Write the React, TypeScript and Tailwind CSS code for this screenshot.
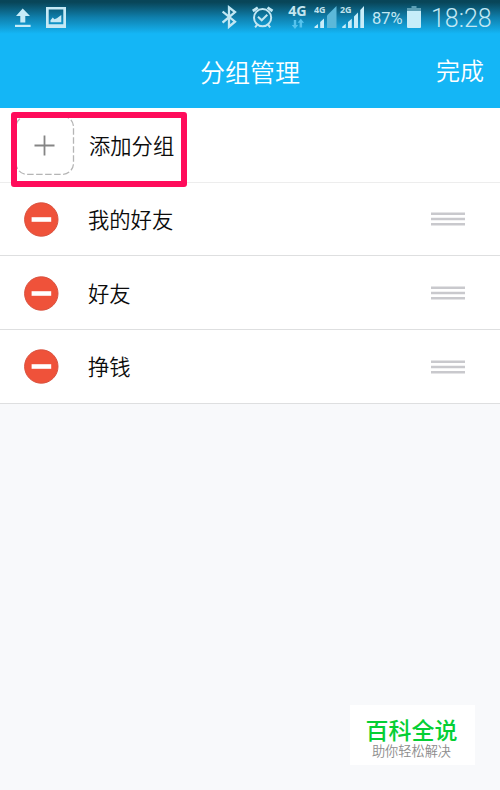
import React from 'react';

const groups = [
  { id: 1, name: '我的好友' },
  { id: 2, name: '好友' },
  { id: 3, name: '挣钱' },
];

const UploadIcon = () => (
  <svg className="ml-[15px] shrink-0" width="16" height="36" viewBox="15 0 16 36" fill="#c6ecf8">
    <path d="M22.700 8.500 30 16h-4.700v6.500h-5V16H16z" />
    <path d="M15 24.800h15.600v2.200H15z" />
  </svg>
);

const PictureIcon = () => (
  <svg className="ml-[15px] shrink-0" width="20" height="36" viewBox="46 0 20 36" fill="#c6e9f5">
    <path fillRule="evenodd" d="M46 7h20v21H46zM48.700 9.500v14.800h14.600V9.500z" />
    <path d="M50.500 22.300v-2l2.300-2.800 1.600 1.800 2.500-1 4.400-3.300v7.300z" />
  </svg>
);

const BluetoothIcon = () => (
  <svg className="shrink-0" width="16" height="36" viewBox="222 0 16 36" fill="none" stroke="#c2e7f3" strokeWidth="2.300">
    <path d="m222.600 11.600 12.400 10.100-6 5V7.400l6 4.600-12.400 10.600" />
  </svg>
);

const AlarmIcon = () => (
  <svg className="ml-[14px] shrink-0" width="22" height="36" viewBox="252 0 22 36" fill="none" stroke="#c2e7f3" strokeWidth="2">
    <circle cx="262.600" cy="17.700" r="8.600" />
    <path strokeWidth="2.800" d="m252.800 11 5-3.400M272.500 11l-5-3.400" />
    <path d="M258 16.800l3.700 3.500 5.600-5.600M257.300 24.700l-2.200 2.700M268 24.700l2.200 2.700" />
  </svg>
);

const NetworkIcon = () => (
  <svg className="ml-[14px] shrink-0" width="20" height="36" viewBox="288 0 20 36">
    <text x="288.200" y="16.400" fontSize="15" fontWeight="700" fill="#c4e5ef" textLength="18.500" lengthAdjust="spacingAndGlyphs" className="font-['Open_Sans',sans-serif]">4G</text>
    <path fill="#55c3ee" d="M293.800 20h2.400v5h1.900l-3.100 4-3.200-4h2zM299.600 27.500h2.500v-4.700h2l-3.300-4-3.200 4h2z" />
  </svg>
);

const SignalIcon = ({ label, weak }: { label: string; weak?: boolean }) => (
  <svg className="shrink-0" width="26" height="36" viewBox="0 0 26 36">
    <text x="0" y="13.200" fontSize="8.800" fontWeight="700" fill="#c0e2ed" textLength="11.600" lengthAdjust="spacingAndGlyphs" className="font-['Open_Sans',sans-serif]">{label}</text>
    {weak ? (
      <>
        <path fill="#5bb8d9" d="M13 28V15.500L22.500 6v22z" />
        <path fill="#c8edf9" d="M.500 28v-1.300L4 24v4zM6.200 28v-6l3.800-3.500V28z" />
      </>
    ) : (
      <path fill="#c8edf9" d="M2.200 28v-1.200l3.600-3V28zM8 28v-6l3.800-3.200V28zM14 28V16.500l4-4V28zM20.300 28V10l3.700-4v22z" />
    )}
  </svg>
);

const BatteryIcon = () => (
  <svg className="shrink-0" width="14" height="36" viewBox="407 0 14 36">
    <path fill="#5c9fb5" d="M411.500 6h5v2h4.500v4h-14V8h4.500z" />
    <path fill="#c6edf9" d="M407 11h14v16a1 1 0 0 1-1 1h-12a1 1 0 0 1-1-1z" />
  </svg>
);

const DeleteIcon = () => (
  <svg className="ml-6 shrink-0" width="35" height="35" viewBox="0 0 35 35">
    <circle cx="17.300" cy="17.500" r="16.700" fill="#ef523a" stroke="#d9523f" />
    <path fill="#fff" d="M7.600 15.200h19.600v4.600H7.600z" />
  </svg>
);

const DragHandle = () => (
  <svg className="ml-auto mr-[35px] shrink-0" width="34" height="14" viewBox="0 0 34 14" stroke="#c9c9cd" strokeWidth="2.400">
    <path d="M0 1.800h34M0 7h34M0 12.200h34" />
  </svg>
);

const StatusBar = () => (
  <div className="flex h-9 items-center bg-linear-to-b from-[#084558] from-6% via-[#0f7fac] via-48% to-[#14b6f6] to-94% text-[#c2e8f4]">
    <UploadIcon />
    <PictureIcon />
    <div className="ml-auto flex h-9 w-[278px] items-center">
      <BluetoothIcon />
      <AlarmIcon />
      <NetworkIcon />
      <div className="ml-[6px] flex">
        <SignalIcon label="4G" weak />
        <SignalIcon label="2G" />
      </div>
      <span className="ml-[6px] w-[35px] whitespace-nowrap pt-px font-['Roboto',sans-serif] text-[16.500px] leading-9">87%</span>
      <BatteryIcon />
      <span className="ml-[10px] whitespace-nowrap pt-[2px] font-['Roboto',sans-serif] text-[25px] font-[350] leading-9">18:28</span>
    </div>
  </div>
);

const App: React.FC = () => {
  return (
    <div className="relative h-[790px] w-[500px] overflow-hidden bg-[#f8f9fb] font-['Noto_Sans_CJK_SC',sans-serif]">
      <header className="h-[108px] bg-[#14b6f6]">
        <StatusBar />
        <div className="grid h-[72px] grid-cols-[1fr_auto_1fr] items-center font-[350] text-white">
          <span />
          <h1 className="pb-px text-[25px] leading-[71px]">分组管理</h1>
          <button className="mr-4 justify-self-end pb-[4px] text-[24px] leading-[68px]">完成</button>
        </div>
      </header>

      <main className="bg-white text-[21.300px] font-[350] text-[#0c0c0c]">
        {/* Add group */}
        <div className="flex h-[74.500px] items-center border-b border-[#ededed]">
          <svg className="ml-[15px] shrink-0" width="60" height="60" viewBox="0 0 60 60" fill="none">
            <rect x="1" y="1" width="57.500" height="58.300" rx="11" stroke="#b5b5b5" strokeWidth="1.300" strokeDasharray="6.500 2.500" />
            <path d="M19.500 30.500h20M29.500 20.500v20" stroke="#858585" strokeWidth="1.800" />
          </svg>
          <span className="ml-[14px] pt-px">添加分组</span>
        </div>

        {groups.map((group) => (
          <div key={group.id} className="flex h-[73.700px] items-center border-b border-[#dedfe0] pt-px">
            <DeleteIcon />
            <span className="ml-[29px] pb-px">{group.name}</span>
            <DragHandle />
          </div>
        ))}
      </main>

      {/* Highlight around the add row */}
      <div className="absolute left-[11px] top-[112px] h-[75px] w-[176px] rounded-[3px] border-6 border-[#ff0c5b]" />

      <div className="absolute bottom-[25px] right-[25px] flex h-[60px] w-[125px] flex-col items-center bg-white pr-[2px] pt-[12px]">
        <p className="text-[23px] font-medium leading-[24px] text-[#05cf34]">百科全说</p>
        <p className="text-[13.200px] font-[350] leading-[20px] text-[#8c8c8c]">助你轻松解决</p>
      </div>
    </div>
  );
};

export default App;
